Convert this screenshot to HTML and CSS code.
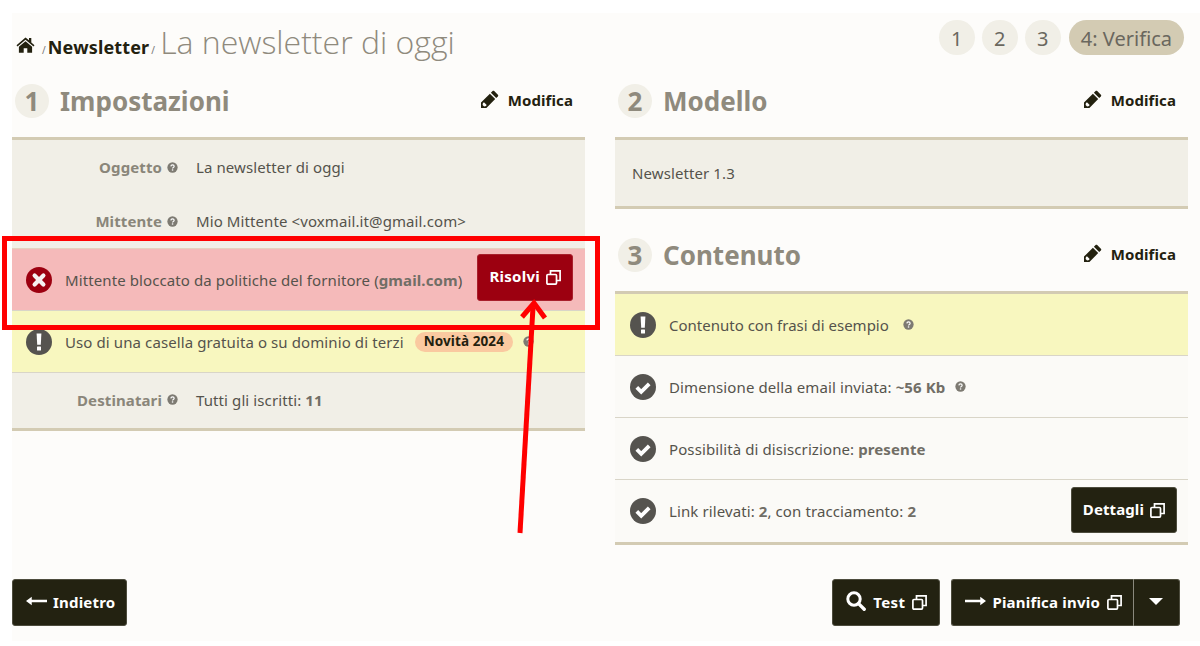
FILE: index.html
```html
<!DOCTYPE html>
<html lang="it">
<head>
<meta charset="utf-8">
<title>La newsletter di oggi</title>
<link rel="stylesheet" href="styles.css">
</head>
<body>
<svg class="defs" width="0" height="0" aria-hidden="true">
  <symbol id="i-home" viewBox="0 0 20 18"><path d="M10 1.6 1 9.2l1 1.2L10 3.7l8 6.7 1-1.2-3.2-2.7V2h-2.3v2.2z"/><path d="M10 5.2 3.4 10.7V16.8h4.8v-4.6h3.6v4.6h4.8v-6.1z"/></symbol>
  <symbol id="i-pencil" viewBox="0 0 18 18"><path d="M13.2 1.1 16.9 4.8c.5.5.5 1.1 0 1.6l-1.7 1.7-5.3-5.3 1.7-1.7c.5-.5 1.1-.5 1.6 0zM8.9 3.8l5.3 5.3-8.8 8.8L0 18v-5.4zM2 12.8l-.4 2.1 1.5 1.5 2.1-.4.3-1.2-2.3-2.3z"/></symbol>
  <symbol id="i-help" viewBox="0 0 12 12"><circle cx="6" cy="6" r="5.6" fill="currentColor"/><path d="M4.2 4.8C4.3 3.7 5 3.1 6 3.1c1.1 0 1.8.6 1.8 1.5 0 .7-.4 1.1-1 1.5-.5.3-.7.5-.7 1" fill="none" stroke="#fff" stroke-width="1.3"/><rect x="5.3" y="8" width="1.5" height="1.4" fill="#fff"/></symbol>
  <symbol id="i-x" viewBox="0 0 26 26"><circle cx="13" cy="13" r="13" fill="currentColor"/><path d="M8.6 8.6l8.8 8.8m0-8.8-8.8 8.8" stroke="#f5f1f1" stroke-width="4.2" stroke-linecap="round"/></symbol>
  <symbol id="i-warn" viewBox="0 0 26 26"><circle cx="13" cy="13" r="13" fill="currentColor"/><path d="M10.6 4.6h4.8l-.6 11.2h-3.6z" fill="#fff"/><rect x="11" y="17.6" width="4" height="4" rx=".5" fill="#fff"/></symbol>
  <symbol id="i-ok" viewBox="0 0 26 26"><circle cx="13" cy="13" r="13" fill="currentColor"/><path d="M6.8 13.4l4.4 4.4 8-8" fill="none" stroke="#fff" stroke-width="3.8"/></symbol>
  <symbol id="i-open" viewBox="0 0 15 15"><path d="M4.5 4.5V.9h9.6v9.6h-3.6" fill="none" stroke="currentColor" stroke-width="1.7"/><rect x=".9" y="4.5" width="9.6" height="9.6" rx="1" fill="none" stroke="currentColor" stroke-width="1.7"/></symbol>
  <symbol id="i-search" viewBox="0 0 20 20"><circle cx="8" cy="8" r="6.2" fill="none" stroke="currentColor" stroke-width="3"/><path d="M12.6 12.6l5.6 5.6" stroke="currentColor" stroke-width="3.4" stroke-linecap="round"/></symbol>
  <symbol id="i-right" viewBox="0 0 22 10"><path d="M0 3.8h16V0.6L22 5l-6 4.4V6.2H0z"/></symbol>
  <symbol id="i-left" viewBox="0 0 22 10"><path d="M22 3.8H6V0.6L0 5l6 4.4V6.2h16z"/></symbol>
</svg>

<div class="app">
  <header class="top">
    <nav class="crumbs">
      <svg class="ico-home"><use href="#i-home"/></svg>
      <span class="sep">/</span><a class="crumb">Newsletter</a><span class="sep">/</span><h1 class="title">La newsletter di oggi</h1>
    </nav>
    <div class="steps">
      <span class="step">1</span><span class="step">2</span><span class="step">3</span><span class="step step-on">4: Verifica</span>
    </div>
  </header>

  <main class="cols">
    <section class="col">
      <div class="sec-head">
        <h2 class="sec-title"><span class="num">1</span>Impostazioni</h2>
        <a class="edit"><svg class="ico-pencil"><use href="#i-pencil"/></svg>Modifica</a>
      </div>
      <div class="panel panel-fields">
        <div class="field"><span class="lab">Oggetto <svg class="ico-help"><use href="#i-help"/></svg></span><span class="val">La newsletter di oggi</span></div>
        <div class="field"><span class="lab">Mittente <svg class="ico-help"><use href="#i-help"/></svg></span><span class="val">Mio Mittente &lt;voxmail.it@gmail.com&gt;</span></div>
        <div class="check check-red">
          <svg class="ico-st ico-red"><use href="#i-x"/></svg>
          <span class="msg">Mittente bloccato da politiche del fornitore (<b>gmail.com</b>)</span>
          <a class="btn btn-red">Risolvi<svg class="ico-open"><use href="#i-open"/></svg></a>
        </div>
        <div class="check check-yellow check-short">
          <svg class="ico-st"><use href="#i-warn"/></svg>
          <span class="msg">Uso di una casella gratuita o su dominio di terzi</span>
          <span class="badge">Novità 2024</span>
          <svg class="ico-help ico-help-gap"><use href="#i-help"/></svg>
        </div>
        <div class="field field-last"><span class="lab">Destinatari <svg class="ico-help"><use href="#i-help"/></svg></span><span class="val">Tutti gli iscritti: <b>11</b></span></div>
      </div>
    </section>

    <section class="col">
      <div class="sec-head">
        <h2 class="sec-title"><span class="num">2</span>Modello</h2>
        <a class="edit"><svg class="ico-pencil"><use href="#i-pencil"/></svg>Modifica</a>
      </div>
      <div class="panel panel-model">Newsletter 1.3</div>
      <div class="sec-head sec-head-second">
        <h2 class="sec-title"><span class="num">3</span>Contenuto</h2>
        <a class="edit"><svg class="ico-pencil"><use href="#i-pencil"/></svg>Modifica</a>
      </div>
      <div class="panel panel-checks">
        <div class="check check-yellow check-r">
          <svg class="ico-st"><use href="#i-warn"/></svg>
          <span class="msg msg-tight">Contenuto con frasi di esempio</span>
          <svg class="ico-help ico-help-wide"><use href="#i-help"/></svg>
        </div>
        <div class="check check-r">
          <svg class="ico-st"><use href="#i-ok"/></svg>
          <span class="msg">Dimensione della email inviata: <b>~56 Kb</b></span>
          <svg class="ico-help ico-help-gap"><use href="#i-help"/></svg>
        </div>
        <div class="check check-r">
          <svg class="ico-st"><use href="#i-ok"/></svg>
          <span class="msg">Possibilità di disiscrizione: <b>presente</b></span>
        </div>
        <div class="check check-r check-end">
          <svg class="ico-st"><use href="#i-ok"/></svg>
          <span class="msg">Link rilevati: <b>2</b>, con tracciamento: <b>2</b></span>
          <a class="btn btn-dark btn-details">Dettagli<svg class="ico-open"><use href="#i-open"/></svg></a>
        </div>
      </div>
    </section>
  </main>

  <footer class="foot">
    <a class="btn btn-dark btn-foot"><svg class="ico-arrow"><use href="#i-left"/></svg>Indietro</a>
    <div class="foot-right">
      <a class="btn btn-dark btn-foot btn-test"><svg class="ico-search"><use href="#i-search"/></svg>Test<svg class="ico-open"><use href="#i-open"/></svg></a>
      <div class="split">
        <a class="btn btn-dark btn-foot split-main"><svg class="ico-arrow"><use href="#i-right"/></svg>Pianifica invio<svg class="ico-open"><use href="#i-open"/></svg></a>
        <a class="btn btn-dark btn-foot split-caret"><span class="caret"></span></a>
      </div>
    </div>
  </footer>
</div>

<div class="anno-box"></div>
<svg class="anno-arrow" width="60" height="240" viewBox="0 0 60 240" aria-hidden="true">
  <path d="M10 236 23 10" fill="none" stroke="#f00" stroke-width="5"/>
  <path d="M12 20 24 6 35 21" fill="none" stroke="#f00" stroke-width="5"/>
</svg>
</body>
</html>
```
FILE: styles.css
```css
* { box-sizing: border-box; }
html, body { margin: 0; padding: 0; }
body {
  width: 1200px;
  height: 646px;
  background: #fff;
  font-family: "Noto Sans", "Open Sans", sans-serif;
  color: #55534c;
  font-size: 15px;
  letter-spacing: .1px;
  padding-top: 13px;
  overflow: hidden;
}
.defs { position: absolute; }
b { font-weight: 700; color: #716e66; }

.app {
  margin-left: 12px;
  width: 1188px;
  height: 628px;
  background: #fdfcfa;
  padding-right: 12px;
}

.top {
  height: 56px;
  display: flex;
  justify-content: space-between;
  align-items: flex-start;
}
.crumbs {
  display: flex;
  align-items: baseline;
  padding: 9px 0 0 3px;
}
.ico-home { width: 21px; height: 18px; fill: #23210f; margin-right: 4px; align-self: center; margin-top: 6px; }
.sep { font-size: 10px; color: #777; margin: 0 2px; }
.crumb { font-size: 18px; font-weight: 700; color: #23210f; letter-spacing: .15px; }
.title { margin: 0 0 0 3px; font-family: "Open Sans", sans-serif; font-size: 32px; font-weight: 300; line-height: 40px; color: #8f8a7d; letter-spacing: 0; }

.steps { display: flex; gap: 7px; padding-top: 7px; margin-right: 4px; }
.step {
  height: 35px;
  min-width: 36px;
  padding: 0 11px;
  border-radius: 18px;
  background: #f1efe7;
  color: #6a675e;
  font-size: 20px;
  line-height: 37px;
  text-align: center;
  letter-spacing: 0;
}
.step-on { background: #d3cbb3; margin-left: 1px; padding: 0 12px; }

.cols { display: grid; grid-template-columns: 573px 573px; column-gap: 30px; }

.sec-head {
  height: 68px;
  display: flex;
  justify-content: space-between;
  align-items: flex-start;
  padding: 15px 12px 0 3px;
}
.sec-head-second { height: 82px; padding-top: 29px; }
.sec-title { margin: 0; display: flex; align-items: center; font-size: 26px; font-weight: 700; line-height: 34px; color: #8f8a7d; letter-spacing: 0; }
.num {
  width: 34px;
  height: 34px;
  border-radius: 50%;
  background: #f1efe7;
  text-align: center;
  margin-right: 11px;
}
.edit { display: flex; align-items: center; font-size: 15px; font-weight: 700; color: #23210f; height: 34px; margin-top: -1px; }
.ico-pencil { width: 18px; height: 18px; fill: #23210f; margin-right: 9px; margin-top: -3px; }

.panel { border-top: 3px solid #d3cbb3; border-bottom: 3px solid #d3cbb3; background: #f1efe7; }
.panel-fields { height: 294px; }
.panel-model { height: 72px; padding: 23px 17px 0; line-height: 20px; }
.panel-checks { height: 254px; background: #fbfaf7; }

.field { display: flex; align-items: center; height: 54px; }
.lab { width: 166px; text-align: right; font-weight: 700; color: #8a867a; font-size: 15px; display: flex; justify-content: flex-end; align-items: center; gap: 5px; }
.val { margin-left: 18px; }
.field-last { height: 53px; }
.ico-help { width: 11px; height: 11px; color: #7d7a72; flex: none; }
.ico-help-gap { margin-left: 10px; }
.ico-help-wide { margin-left: 14px; }

.check { display: flex; align-items: center; padding-left: 15px; border-bottom: 1px solid #d9d5c8; }
.check-red { height: 63px; background: #f5baba; border-top: 1px solid #e4d3bf; padding: 0 12px 0 14px; }
.check-yellow { background: #f8f7bf; }
.check-short { height: 62px; padding-left: 14px; }
.check-r { height: 62px; }
.check-end { border-bottom: 0; height: 62px; padding-right: 11px; }
.ico-st { width: 26px; height: 26px; color: #55534f; margin-right: 13px; flex: none; }
.ico-red { color: #9c0010; }
.msg { white-space: nowrap; }
.msg-tight { letter-spacing: 0; }
.check-red .msg { flex: 1; }
.check-end .msg { flex: 1; }

.badge {
  margin-left: 11px;
  height: 20px;
  line-height: 19px;
  padding: 0 9px;
  border-radius: 10px;
  background: #fac9a0;
  color: #23210f;
  font-size: 13.5px;
  font-weight: 700;
}

.btn {
  display: inline-flex;
  align-items: center;
  gap: 6px;
  height: 46px;
  padding: 0 11px 3px;
  border-radius: 3px;
  font-size: 15px;
  font-weight: 700;
  color: #fff;
}
.btn-dark { background: #232211; border: 1px solid #4d4c3d; }
.btn-details { margin-top: -2px; }
.btn-red { background: #9c0010; border: 1px solid #a8202c; height: 47px; margin-top: -4px; letter-spacing: .25px; }
.ico-open { width: 15px; height: 15px; flex: none; color: #fff; margin-top: 3px; }

.foot {
  margin-top: 34px;
  display: flex;
  justify-content: space-between;
}
.foot-right { display: flex; gap: 11px; margin-right: 8px; }
.btn-foot { gap: 7px; height: 47px; padding: 0 11px 2px 13px; letter-spacing: .2px; }
.btn-test { padding-right: 12px; letter-spacing: .4px; }
.btn-foot .ico-open { margin-top: 1px; }
.ico-arrow { width: 21px; height: 10px; fill: #fff; margin: -2px -1px 0 0; }
.ico-search { width: 20px; height: 20px; color: #fff; margin-top: -2px; }
.split { display: flex; }
.split-main { border-radius: 3px 0 0 3px; border-right: 1px solid #8a897d; }
.split-caret { border-radius: 0 3px 3px 0; border-left: 0; padding: 0 16px 3px 15px; }
.caret { width: 0; height: 0; border-left: 7px solid transparent; border-right: 7px solid transparent; border-top: 7px solid #fff; }

.anno-box { position: absolute; left: 2px; top: 236px; width: 598px; height: 94px; border: 5px solid #f00; }
.anno-arrow { position: absolute; left: 510px; top: 297px; }
```
